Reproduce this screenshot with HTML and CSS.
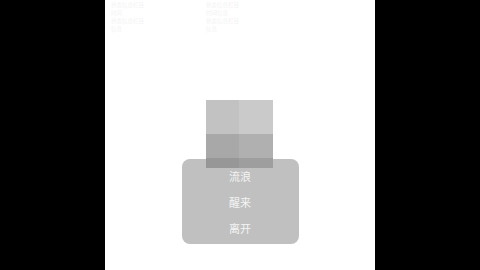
FILE: index.html
```html
<!DOCTYPE html>
<html lang="zh-CN">
<head>
  <meta charset="UTF-8">
  <meta name="viewport" content="width=device-width, initial-scale=1">
  <title>菜单</title>
  <link rel="stylesheet" href="styles.css">
</head>
<body>
<div class="screen">
  <div class="header">
    <div class="faint faint-left">
      <div>状态信息栏目</div>
      <div>时间</div>
      <div>状态信息栏目</div>
      <div>信息</div>
    </div>
    <div class="faint faint-right">
      <div>状态信息栏目</div>
      <div>时间信息</div>
      <div>状态信息栏目</div>
      <div>信息</div>
    </div>
  </div>
  <div class="stage">
    <div class="block">
      <div class="cell c-1"></div>
      <div class="cell c-2"></div>
      <div class="cell c-3"></div>
      <div class="cell c-4"></div>
      <div class="cell c-5"></div>
      <div class="cell c-6"></div>
    </div>
    <div class="menu">
      <div class="menu-item">流浪</div>
      <div class="menu-item">醒来</div>
      <div class="menu-item">离开</div>
    </div>
  </div>
</div>
</body>
</html>
```

FILE: styles.css
```css
html, body {
  margin: 0;
  height: 100%;
  background: #000000;
}

.screen {
  width: 270px;
  height: 270px;
  margin: 0 auto;
  background: #ffffff;
  display: flex;
  flex-direction: column;
  font-family: "Noto Sans CJK SC", "Noto Sans", sans-serif;
}

.header {
  display: flex;
  height: 32px;
  padding: 1px 0 0 6px;
  gap: 62px;
}

.faint {
  font-size: 5.5px;
  line-height: 8px;
  color: #f3f3f3;
}

.stage {
  display: flex;
  flex-direction: column;
  align-items: center;
  padding-top: 67px;
}

.block {
  width: 67px;
  display: grid;
  grid-template-columns: 33px 34px;
  grid-template-rows: 34px 24px 10px;
  position: relative;
  z-index: 1;
  margin-left: -1px;
}

.c-1 { background: #c2c2c2; }
.c-2 { background: #cacaca; }
.c-3 { background: #a8a8a8; }
.c-4 { background: #b0b0b0; }
.c-5 { background: #979797; }
.c-6 { background: #9e9e9e; }

.menu {
  width: 117px;
  margin-top: -9px;
  padding: 3.5px 0;
  background: #c0c0c0;
  border-radius: 8px;
  box-sizing: border-box;
}

.menu-item {
  height: 26px;
  line-height: 26px;
  font-size: 11px;
  color: #f4f4f4;
  text-align: center;
  position: relative;
  z-index: 2;
}
```
